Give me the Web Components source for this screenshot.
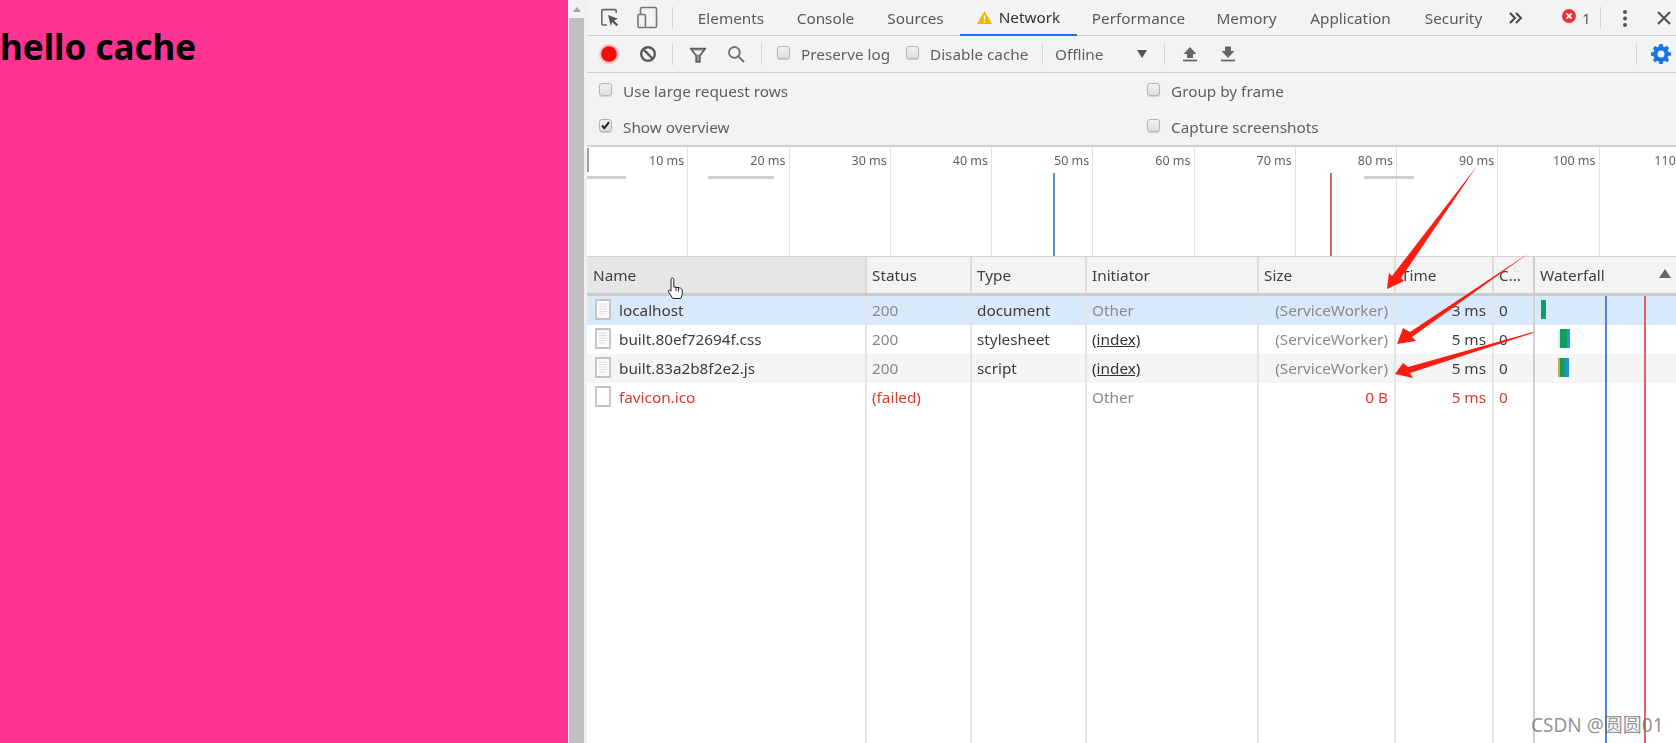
<!DOCTYPE html>
<html lang="en">
<head>
<meta charset="utf-8">
<title>hello cache</title>
<style>
  html, body { margin: 0; height: 100%; overflow: hidden; }
  body { font-family: "Noto Sans", "Open Sans", sans-serif; }
</style>
</head>
<body>
<split-view>
  <page-pane slot="page">hello cache</page-pane>
  <devtools-panel slot="tools"></devtools-panel>
</split-view>
<shot-notes></shot-notes>

<script>
// Icon set used by every DevTools component
class DtIcon extends HTMLElement {
  static get paths() {
    return {
      inspect: `<path d="M7 17H3a1.2 1.2 0 01-1.2-1.2V2.8A1.2 1.2 0 013 1.6h12a1.2 1.2 0 011.2 1.2V5" fill="none" stroke="#6a6a6a" stroke-width="1.6"/><path d="M8 7l10 3.8-4 1.6 4 4.2-1.6 1.6-4-4.2-1.6 4z" fill="#555"/>`,
      device: `<path d="M3.5 7V2a1.5 1.5 0 011.5-1.5h13A1.5 1.5 0 0119.5 2v17a1.5 1.5 0 01-1.5 1.5H8.5" fill="none" stroke="#777" stroke-width="1.6"/><rect x="1" y="7.5" width="7.4" height="13" rx="1" fill="none" stroke="#777" stroke-width="1.6"/>`,
      record: `<circle cx="9" cy="9" r="10.5" fill="#f00" opacity=".1"/><circle cx="9" cy="9" r="9.2" fill="#f00" opacity=".16"/><circle cx="9" cy="9" r="7.8" fill="#f20d0d"/>`,
      clear: `<circle cx="9" cy="9" r="6.8" fill="none" stroke="#5c5c5c" stroke-width="2.4"/><path d="M4.2 4.2l9.6 9.6" stroke="#5c5c5c" stroke-width="2.4"/>`,
      filter: `<path d="M1.5 3.5h15L11 10.5v6.5H7v-6.5z" fill="#8f8f8f" stroke="#5c5c5c" stroke-width="1.4" stroke-linejoin="round"/><path d="M4.5 5.6h9L10.6 9.4H7.4z" fill="#eee"/>`,
      search: `<circle cx="7.4" cy="7.4" r="5.4" fill="none" stroke="#707070" stroke-width="1.8"/><path d="M11.4 11.4l5.6 5.6" stroke="#707070" stroke-width="2"/>`,
      up: `<path d="M9 2L2.5 9H6v4h6V9h3.5z" fill="#666"/><path d="M2 15.5h14" stroke="#666" stroke-width="1.8"/>`,
      down: `<path d="M6 1.5h6V6h3.5L9 13 2.5 6H6z" fill="#666"/><path d="M2 15.5h14" stroke="#666" stroke-width="1.8"/>`,
      gear: `<path fill-rule="evenodd" d="M7.4 0h3.2l.5 2.5 1.6.7 2.2-1.4 2.2 2.3-1.4 2.1.7 1.7 2.6.5v3.2l-2.6.5-.7 1.7 1.4 2.1-2.2 2.3-2.2-1.4-1.6.7-.5 2.5H7.4l-.5-2.5-1.6-.7-2.2 1.4L.9 16l1.4-2.1-.7-1.7L-1 11.7V8.5l2.6-.5.7-1.7L.9 4.2l2.2-2.3 2.2 1.4 1.6-.7zM9 6.6a3.5 3.5 0 100 7 3.5 3.5 0 000-7z" fill="#1a73e8" transform="translate(0 -1)"/>`,
      warning: `<path d="M7.5 1L15 14H0z" fill="#f4b400"/><path d="M6.8 5.2h1.4v4.8H6.8zM6.8 11h1.4v1.4H6.8z" fill="#fff"/>`,
      error: `<circle cx="8" cy="8" r="7" fill="#e8323c"/><path d="M5.4 5.4l5.2 5.2M10.6 5.4l-5.2 5.2" stroke="#fff" stroke-width="1.7"/>`,
      more: `<path d="M2 3l5 5-5 5M8 3l5 5-5 5" fill="none" stroke="#444" stroke-width="1.9"/>`,
      dots: `<circle cx="9" cy="3" r="2" fill="#555"/><circle cx="9" cy="9.5" r="2" fill="#555"/><circle cx="9" cy="16" r="2" fill="#555"/>`,
      close: `<path d="M3 3l12 12M15 3L3 15" stroke="#555" stroke-width="2.2"/>`,
      file: `<path d="M1 1h14v19H1z" fill="#fafafa" stroke="#c2c2c2" stroke-width="1.8"/><path d="M4 5h8M4 7.5h8M4 10h8M4 12.5h8M4 15h6" stroke="#dedede" stroke-width="1"/>`,
      blank: `<path d="M1 1h14v19H1z" fill="#fff" stroke="#c2c2c2" stroke-width="1.8"/>`
    };
  }

  constructor() {
    super();
    const name = this.getAttribute('name');
    const w = this.getAttribute('w') || 18;
    const h = this.getAttribute('h') || 18;
    this.attachShadow({ mode: 'open' }).innerHTML = `
      <style>
        :host { display: block; flex: none; width: ${w}px; height: ${h}px; }
        svg { display: block; overflow: visible; }
      </style>
      <svg width="${w}" height="${h}" viewBox="0 0 ${w} ${h}">${DtIcon.paths[name] || ''}</svg>`;
  }
}
customElements.define('dt-icon', DtIcon);

class DtCheckbox extends HTMLElement {
  constructor() {
    super();
    const on = this.hasAttribute('checked');
    this.attachShadow({ mode: 'open' }).innerHTML = `
      <style>
        :host { display: flex; align-items: center; flex: none; color: #5f5f5f; white-space: nowrap; }
        .box {
          width: 13px; height: 13px; box-sizing: border-box; flex: none;
          margin: 0 11px 4px 0;
          border: 1px solid #b4b4b4; border-radius: 3px;
          background: linear-gradient(#f2f2f2, #dedede);
          box-shadow: 0 1px 1px rgba(0,0,0,.15);
        }
        svg { display: block; }
      </style>
      <span class="box">${on ? '<svg width="11" height="11" viewBox="0 0 11 11"><path d="M2 5.5l2.4 2.6L9 2.2" fill="none" stroke="#222" stroke-width="2"/></svg>' : ''}</span>
      <slot></slot>`;
  }
}
customElements.define('dt-checkbox', DtCheckbox);

class DtTabbar extends HTMLElement {
  constructor() {
    super();
    const tabs = ['Elements', 'Console', 'Sources', 'Network', 'Performance', 'Memory', 'Application', 'Security'];
    const widths = [98, 91, 89, 117, 123, 93, 115, 91];
    const tabHtml = tabs.map((t, i) => `
      <div class="tab ${t === 'Network' ? 'on' : ''}" style="width:${widths[i]}px">
        ${t === 'Network' ? '<dt-icon name="warning" w="15" h="15"></dt-icon>' : ''}${t}
      </div>`).join('');
    this.attachShadow({ mode: 'open' }).innerHTML = `
      <style>
        :host {
          display: flex; align-items: center; height: 36px; box-sizing: border-box;
          padding-left: 13px; background: #f3f3f3; border-bottom: 1px solid #cdcdcd;
          font-size: var(--ui-size); color: #5a5a5a;
        }
        .sep { width: 1px; height: 22px; background: #d4d4d4; flex: none; }
        .tab {
          display: flex; align-items: center; justify-content: center; gap: 7px;
          height: 36px; box-sizing: border-box; flex: none; white-space: nowrap;
        }
        .tab.on { color: #333; border-bottom: 2px solid #1a73e8; padding-top: 1px; }
      </style>
      <dt-icon name="inspect" w="20" h="20"></dt-icon>
      <dt-icon name="device" w="20" h="22" style="margin-left:17px"></dt-icon>
      <span class="sep" style="margin-left:15px"></span>
      <span style="width:9px;flex:none"></span>
      ${tabHtml}
      <dt-icon name="more" w="16" h="16" style="margin-left:9px"></dt-icon>
      <dt-icon name="error" w="16" h="16" style="margin-left:37px;margin-bottom:3px"></dt-icon>
      <span style="margin-left:5px;flex:none">1</span>
      <span class="sep" style="margin-left:9px"></span>
      <dt-icon name="dots" style="margin-left:15px"></dt-icon>
      <dt-icon name="close" style="margin-left:21px"></dt-icon>`;
  }
}
customElements.define('dt-tabbar', DtTabbar);

class DtToolbar extends HTMLElement {
  constructor() {
    super();
    this.attachShadow({ mode: 'open' }).innerHTML = `
      <style>
        :host {
          display: flex; align-items: center; height: 37px; box-sizing: border-box;
          padding: 0 6px 0 13px; background: #f3f3f3; border-bottom: 1px solid #cdcdcd;
          font-size: var(--ui-size); color: #5f5f5f;
        }
        .sep { width: 1px; height: 22px; background: #d4d4d4; flex: none; }
        .select { display: flex; align-items: center; justify-content: space-between; width: 109px; flex: none; margin-left: 12px; }
        .tri { width: 0; height: 0; margin-right: 17px; border: 5px solid transparent; border-top: 8px solid #555; border-bottom: 0; }
      </style>
      <dt-icon name="record"></dt-icon>
      <dt-icon name="clear" style="margin-left:21px"></dt-icon>
      <span class="sep" style="margin-left:15px"></span>
      <dt-icon name="filter" style="margin-left:16px"></dt-icon>
      <dt-icon name="search" style="margin-left:20px"></dt-icon>
      <span class="sep" style="margin-left:16px"></span>
      <dt-checkbox style="margin-left:15px;width:129px">Preserve log</dt-checkbox>
      <dt-checkbox style="width:136px">Disable cache</dt-checkbox>
      <span class="sep"></span>
      <div class="select">Offline<span class="tri"></span></div>
      <span class="sep"></span>
      <dt-icon name="up" style="margin-left:16px"></dt-icon>
      <dt-icon name="down" style="margin-left:20px"></dt-icon>
      <span class="sep" style="margin-left:auto"></span>
      <dt-icon name="gear" style="margin-left:15px"></dt-icon>`;
  }
}
customElements.define('dt-toolbar', DtToolbar);

class DtOptions extends HTMLElement {
  constructor() {
    super();
    this.attachShadow({ mode: 'open' }).innerHTML = `
      <style>
        :host {
          display: grid; grid-template-columns: 548px 1fr; grid-auto-rows: 36px; align-items: center;
          height: 72px; padding-left: 12px; background: #f3f3f3;
          font-size: var(--ui-size);
        }
      </style>
      <dt-checkbox>Use large request rows</dt-checkbox>
      <dt-checkbox>Group by frame</dt-checkbox>
      <dt-checkbox checked>Show overview</dt-checkbox>
      <dt-checkbox>Capture screenshots</dt-checkbox>`;
  }
}
customElements.define('dt-options', DtOptions);

class DtOverview extends HTMLElement {
  constructor() {
    super();
    let cells = '';
    for (let ms = 10; ms <= 110; ms += 10) cells += `<div class="cell">${ms}&nbsp;ms</div>`;
    this.attachShadow({ mode: 'open' }).innerHTML = `
      <style>
        :host {
          display: flex; position: relative; height: 111px; box-sizing: border-box;
          background: #fff; border-top: 2px solid #d2d2d2;
          font-size: 12.5px; color: #5f5f5f; overflow: hidden;
        }
        .cell {
          flex: none; width: 101.25px; box-sizing: border-box; padding: 5px 3px 0 0;
          text-align: right; white-space: nowrap; border-right: 1px solid #e2e2e2;
        }
        .mark { position: absolute; }
        .handle { left: 0; top: 1px; width: 2px; height: 24px; background: #a0a0a0; }
        .bar { top: 29px; height: 3px; background: #cfcfcf; }
        .load { top: 26px; bottom: 0; width: 2px; }
      </style>
      ${cells}
      <span class="mark handle"></span>
      <span class="mark bar" style="left:0;width:39px"></span>
      <span class="mark bar" style="left:121px;width:66px"></span>
      <span class="mark bar" style="left:777px;width:50px"></span>
      <span class="mark load" style="left:466px;background:#5b8fc9"></span>
      <span class="mark load" style="left:743px;background:#c96a6a"></span>`;
  }
}
customElements.define('dt-overview', DtOverview);

// One line of the request table, columns come from --net-cols
class NetRow extends HTMLElement {
  constructor() {
    super();
    const a = (n) => this.getAttribute(n) || '';
    const failed = this.hasAttribute('failed');
    const link = (v) => v === '(index)' ? `<u>${v}</u>` : v;
    this.attachShadow({ mode: 'open' }).innerHTML = `
      <style>
        :host {
          display: grid; grid-template-columns: var(--net-cols); height: 29px;
          font-size: var(--ui-size); color: #3c3c3c; background: var(--row-bg, #fff);
        }
        .c { display: flex; align-items: center; box-sizing: border-box; padding: 0 5px 2px; white-space: nowrap; overflow: hidden; border-left: 2px solid #e4e4e4; margin-left: -1px; }
        .c.first { border-left: 0; margin-left: 0; padding-left: 8px; gap: 8px; }
        .c.last { border-left-color: #cfcfcf; padding: 0; position: relative; }
        .gray { color: #8a8a8a; }
        .right { justify-content: flex-end; padding-right: 7px; }
        .fail, .fail .gray { color: #d93a2b; }
        .other { color: #8a8a8a; }
        u { color: #333; }
      </style>
      <div class="c first ${failed ? 'fail' : ''}"><dt-icon name="${failed ? 'blank' : 'file'}" w="16" h="21"></dt-icon>${a('name')}</div>
      <div class="c ${failed ? 'fail' : 'gray'}">${a('status')}</div>
      <div class="c">${a('type')}</div>
      <div class="c ${a('init') === 'Other' ? 'other' : ''}">${link(a('init'))}</div>
      <div class="c right ${failed ? 'fail' : 'gray'}">${a('size')}</div>
      <div class="c right ${failed ? 'fail' : ''}">${a('time')}</div>
      <div class="c ${failed ? 'fail' : ''}">${a('c')}</div>
      <div class="c last"><slot></slot></div>`;
  }
}
customElements.define('net-row', NetRow);

class NetTable extends HTMLElement {
  constructor() {
    super();
    this.attachShadow({ mode: 'open' }).innerHTML = `
      <style>
        :host {
          display: flex; flex-direction: column; flex: 1; position: relative; min-height: 0;
          --net-cols: 279px 105px 115px 172px 137px 98px 41px 142px;
          background: #fff;
        }
        .head {
          display: grid; grid-template-columns: var(--net-cols); height: 40px; box-sizing: border-box; flex: none;
          background: #f3f3f3; border-bottom: 3px solid #cbcbcb; border-top: 1px solid #d2d2d2;
          font-size: var(--ui-size); color: #3f3f3f;
        }
        .head div { display: flex; align-items: center; box-sizing: border-box; padding: 0 5px; border-left: 2px solid #dcdcdc; margin-left: -1px; white-space: nowrap; overflow: hidden; }
        .head div:first-child { border-left: 0; margin-left: 0; padding-left: 6px; background: #e6e6e6; }
        .head .wf { justify-content: space-between; border-left-color: #cfcfcf; padding-right: 5px; }
        .tri { width: 0; height: 0; border: 6px solid transparent; border-bottom: 9px solid #666; border-top: 0; margin-bottom: 3px; }
        .fill { flex: 1; display: grid; grid-template-columns: var(--net-cols); }
        .fill span { border-left: 2px solid #e4e4e4; margin-left: -1px; }
        .fill span:first-child { border-left: 0; margin-left: 0; }
        .fill span:last-child { border-left-color: #cfcfcf; }
        .line { position: absolute; top: 40px; bottom: 0; width: 2px; }
      </style>
      <div class="head">
        <div>Name</div><div>Status</div><div>Type</div><div>Initiator</div><div>Size</div><div>Time</div><div>C...</div>
        <div class="wf">Waterfall<span class="tri"></span></div>
      </div>
      <slot></slot>
      <div class="fill"><span></span><span></span><span></span><span></span><span></span><span></span><span></span><span></span></div>
      <span class="line" style="left:1018px;background:#4a86d4"></span>
      <span class="line" style="left:1057px;background:#d9685f"></span>`;
  }
}
customElements.define('net-table', NetTable);

class WfBar extends HTMLElement {
  constructor() {
    super();
    const x = +this.getAttribute('x');
    const segs = (this.getAttribute('segs') || '').split(' ').map(s => {
      const [w, c] = s.split(':');
      return `<i style="width:${w}px;background:${c}"></i>`;
    }).join('');
    this.attachShadow({ mode: 'open' }).innerHTML = `
      <style>
        :host { position: absolute; left: ${x}px; top: 4px; height: 19px; display: flex; }
        i { display: block; }
      </style>${segs}`;
  }
}
customElements.define('wf-bar', WfBar);

class DevtoolsPanel extends HTMLElement {
  constructor() {
    super();
    this.attachShadow({ mode: 'open' }).innerHTML = `
      <style>
        :host {
          display: flex; flex-direction: column; flex: 1; min-width: 0; height: 100%;
          --ui-size: 15.3px; font-family: "Noto Sans", "Open Sans", sans-serif;
          filter: blur(.35px);
        }
      </style>
      <dt-tabbar></dt-tabbar>
      <dt-toolbar></dt-toolbar>
      <dt-options></dt-options>
      <dt-overview></dt-overview>
      <net-table>
        <net-row style="--row-bg:#d9e9fc" name="localhost" status="200" type="document" init="Other" size="(ServiceWorker)" time="3 ms" c="0">
          <wf-bar x="6" segs="5:#0f9d63"></wf-bar>
        </net-row>
        <net-row name="built.80ef72694f.css" status="200" type="stylesheet" init="(index)" size="(ServiceWorker)" time="5 ms" c="0">
          <wf-bar x="23" segs="2:#e6e6e6 7:#0f9d63 3:#1e9be0"></wf-bar>
        </net-row>
        <net-row style="--row-bg:#f5f5f5" name="built.83a2b8f2e2.js" status="200" type="script" init="(index)" size="(ServiceWorker)" time="5 ms" c="0">
          <wf-bar x="23" segs="2:#d9a531 5:#0f9d63 4:#1e8fe0"></wf-bar>
        </net-row>
        <net-row failed name="favicon.ico" status="(failed)" init="Other" size="0 B" time="5 ms" c="0"></net-row>
      </net-table>`;
  }
}
customElements.define('devtools-panel', DevtoolsPanel);

class PagePane extends HTMLElement {
  constructor() {
    super();
    this.attachShadow({ mode: 'open' }).innerHTML = `
      <style>
        :host { display: block; flex: none; width: 568px; height: 100%; background: #ff3391; color: #000; }
        h1 { margin: 0; padding-top: 22px; font: 700 35px/50px "Noto Sans", "Open Sans", sans-serif; }
      </style>
      <h1><slot></slot></h1>`;
  }
}
customElements.define('page-pane', PagePane);

class SplitView extends HTMLElement {
  constructor() {
    super();
    this.attachShadow({ mode: 'open' }).innerHTML = `
      <style>
        :host { display: flex; width: 1676px; height: 743px; overflow: hidden; }
        .scroll { flex: none; width: 19px; height: 100%; box-sizing: border-box; display: flex; flex-direction: column; align-items: center; background: #f1f1f1; padding: 0 2px 0 0; }
        .arrow { height: 18px; flex: none; display: flex; align-items: center; }
        .arrow i { width: 0; height: 0; border: 4px solid transparent; border-bottom: 5px solid #a3a3a3; border-top: 0; }
        .thumb { flex: 1; width: 15px; background: #c1c1c1; }
      </style>
      <slot name="page"></slot>
      <div class="scroll"><div class="arrow"><i></i></div><div class="thumb"></div></div>
      <slot name="tools"></slot>`;
  }
}
customElements.define('split-view', SplitView);

// Hand-drawn markup on the screenshot: arrows, the mouse pointer and the watermark
class ShotNotes extends HTMLElement {
  constructor() {
    super();
    this.attachShadow({ mode: 'open' }).innerHTML = `
      <style>
        :host { position: absolute; left: 0; top: 0; width: 1676px; height: 743px; pointer-events: none; display: block; }
        svg { position: absolute; left: 0; top: 0; }
        .mark {
          position: absolute; left: 1531px; top: 710px; white-space: nowrap;
          font: 19px/30px "Noto Sans", "Noto Sans CJK SC", sans-serif; color: rgba(110,110,110,.75);
        }
      </style>
      <svg width="1676" height="743" viewBox="0 0 1676 743">
        <g fill="#fc1c10">
          <path d="M1477 166L1401 278 1404 281 1387 289 1389 273 1392 276z"/>
          <path d="M1529 253L1412 337 1416 341 1397 344 1403 328 1410 332z"/>
          <path d="M1533 332L1408 367 1403 363 1395 374 1413 378 1410 373 1533 333z"/>
        </g>
        <g stroke="#222" stroke-width="1" fill="#fff" stroke-linejoin="round">
          <path d="M671 279.5a1.4 1.4 0 012.8 0V287l5.5 .8c2 .4 3 1.2 3 3v3.4l-1.5 4.3h-8l-4.3-6.6c-.7-1.3.9-2.5 2-1.4l.5.7z"/>
          <path d="M676 287v4M678.5 287.5v4" fill="none"/>
        </g>
      </svg>
      <div class="mark">CSDN @圆圆01</div>`;
  }
}
customElements.define('shot-notes', ShotNotes);
</script>
</body>
</html>
